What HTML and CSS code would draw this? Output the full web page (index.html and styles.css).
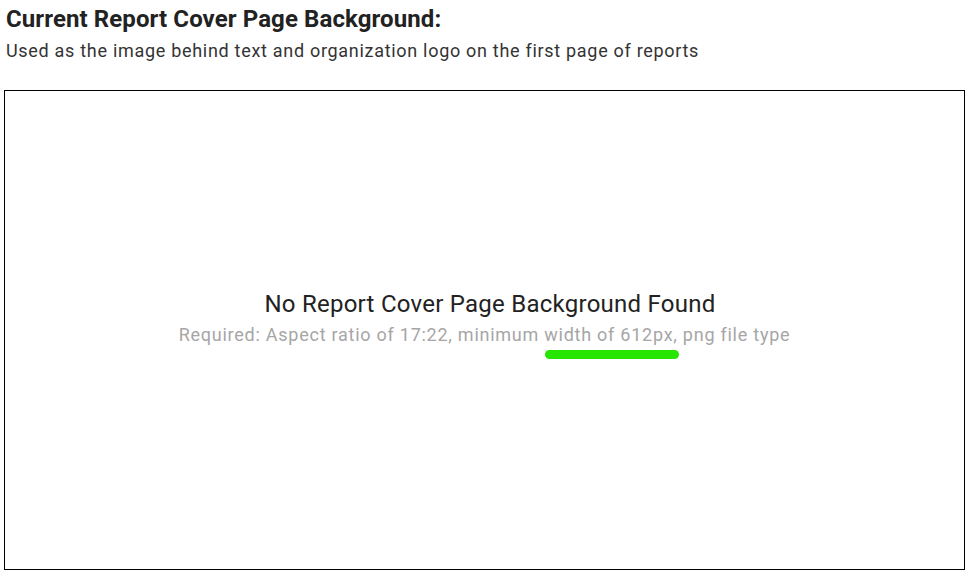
FILE: index.html
```html
<!DOCTYPE html>
<html lang="en">

<head>
    <meta charset="UTF-8">
    <meta name="viewport" content="width=device-width, initial-scale=1.0">
    <title>Report Cover Page Background</title>
    <link rel="stylesheet" href="styles.css">
</head>

<body>
    <!-- 标题 -->
    <div class="head">
        <h2 class="title">Current Report Cover Page Background:</h2>
        <p class="desc">Used as the image behind text and organization logo on the first page of reports</p>
    </div>
    <!-- 预览框 -->
    <div class="preview">
        <div class="empty">
            <p class="empty-title">No Report Cover Page Background Found</p>
            <p class="empty-note">Required: Aspect ratio of 17:22, minimum <span class="mark">width of 612px</span>, png file type</p>
        </div>
    </div>
</body>

</html>
```

FILE: styles.css
```css
* {
    margin: 0;
    padding: 0;
}

body {
    font-family: Roboto, "Liberation Sans", sans-serif;
    color: #212121;
    background-color: #fff;
    padding: 4px 10px 0 4px;
}

.head {
    padding-left: 2px;
}

.title {
    font-size: 24px;
    font-weight: 700;
    line-height: 30px;
    letter-spacing: 0.1px;
    color: #222;
}

.desc {
    margin-top: 4px;
    font-size: 18px;
    line-height: 26px;
    color: #333;
    letter-spacing: 0.7px;
}

.preview {
    margin-top: 26px;
    height: 478px;
    border: 1px solid #000;
    display: flex;
    align-items: center;
    justify-content: center;
}

.empty {
    text-align: center;
    margin-top: -23px;
}

.empty-title {
    margin-bottom: 3px;
    padding-left: 11px;
    font-size: 24px;
    line-height: 30px;
    letter-spacing: 0.25px;
    color: #222;
}

.empty-note {
    font-size: 18px;
    line-height: 26px;
    letter-spacing: 0.75px;
    color: #a6a6a6;
}

.mark {
    position: relative;
}

.mark::after {
    content: "";
    position: absolute;
    left: 1px;
    right: -6px;
    bottom: -14px;
    height: 9px;
    border-radius: 5px;
    background-color: #26e600;
}
```
